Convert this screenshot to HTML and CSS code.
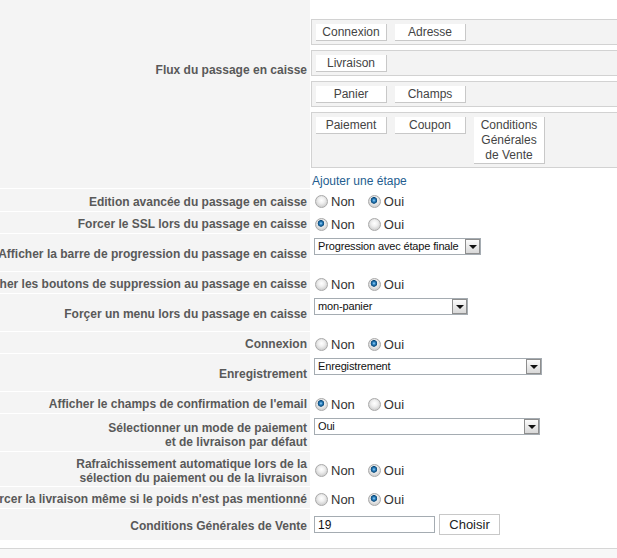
FILE: index.html
```html
<!DOCTYPE html>
<html lang="fr">
<head>
    <meta charset="UTF-8">
    <meta name="viewport" content="width=device-width, initial-scale=1.0">
    <title>Passage en caisse</title>
    <link rel="stylesheet" href="styles.css">
</head>
<body>
    <div class="settings">
        <div class="row row-flow">
            <div class="label">Flux du passage en caisse</div>
            <div class="field">
                <div class="steps">
                    <span class="step">Connexion</span>
                    <span class="step">Adresse</span>
                </div>
                <div class="steps">
                    <span class="step">Livraison</span>
                </div>
                <div class="steps">
                    <span class="step">Panier</span>
                    <span class="step">Champs</span>
                </div>
                <div class="steps">
                    <span class="step">Paiement</span>
                    <span class="step">Coupon</span>
                    <span class="step">Conditions Générales de Vente</span>
                </div>
                <a class="add-step" href="#">Ajouter une étape</a>
            </div>
        </div>

        <div class="row row-radio row-first">
            <div class="label">Edition avancée du passage en caisse</div>
            <div class="field">
                <label class="choice"><input type="radio" class="radio" name="advanced"> Non</label>
                <label class="choice"><input type="radio" class="radio" name="advanced" checked> Oui</label>
            </div>
        </div>

        <div class="row row-radio">
            <div class="label">Forcer le SSL lors du passage en caisse</div>
            <div class="field">
                <label class="choice"><input type="radio" class="radio" name="ssl" checked> Non</label>
                <label class="choice"><input type="radio" class="radio" name="ssl"> Oui</label>
            </div>
        </div>

        <div class="row row-select">
            <div class="label">Afficher la barre de progression du passage en caisse</div>
            <div class="field">
                <div class="select select-progress">
                    <span class="select-text">Progression avec étape finale</span>
                    <span class="select-arrow"></span>
                </div>
            </div>
        </div>

        <div class="row row-radio">
            <div class="label">Afficher les boutons de suppression au passage en caisse</div>
            <div class="field">
                <label class="choice"><input type="radio" class="radio" name="delete"> Non</label>
                <label class="choice"><input type="radio" class="radio" name="delete" checked> Oui</label>
            </div>
        </div>

        <div class="row row-select">
            <div class="label">Forçer un menu lors du passage en caisse</div>
            <div class="field">
                <div class="select select-menu">
                    <span class="select-text">mon-panier</span>
                    <span class="select-arrow"></span>
                </div>
            </div>
        </div>

        <div class="row row-radio">
            <div class="label">Connexion</div>
            <div class="field">
                <label class="choice"><input type="radio" class="radio" name="login"> Non</label>
                <label class="choice"><input type="radio" class="radio" name="login" checked> Oui</label>
            </div>
        </div>

        <div class="row row-select">
            <div class="label">Enregistrement</div>
            <div class="field">
                <div class="select select-register">
                    <span class="select-text">Enregistrement</span>
                    <span class="select-arrow"></span>
                </div>
            </div>
        </div>

        <div class="row row-radio">
            <div class="label">Afficher le champs de confirmation de l'email</div>
            <div class="field">
                <label class="choice"><input type="radio" class="radio" name="email" checked> Non</label>
                <label class="choice"><input type="radio" class="radio" name="email"> Oui</label>
            </div>
        </div>

        <div class="row row-select row-two-lines">
            <div class="label">Sélectionner un mode de paiement<br>et de livraison par défaut</div>
            <div class="field">
                <div class="select select-default">
                    <span class="select-text">Oui</span>
                    <span class="select-arrow"></span>
                </div>
            </div>
        </div>

        <div class="row row-radio row-two-lines">
            <div class="label">Rafraîchissement automatique lors de la<br>sélection du paiement ou de la livraison</div>
            <div class="field">
                <label class="choice"><input type="radio" class="radio" name="refresh"> Non</label>
                <label class="choice"><input type="radio" class="radio" name="refresh" checked> Oui</label>
            </div>
        </div>

        <div class="row row-radio">
            <div class="label">Forcer la livraison même si le poids n'est pas mentionné</div>
            <div class="field">
                <label class="choice"><input type="radio" class="radio" name="weight"> Non</label>
                <label class="choice"><input type="radio" class="radio" name="weight" checked> Oui</label>
            </div>
        </div>

        <div class="row row-cgv">
            <div class="label">Conditions Générales de Vente</div>
            <div class="field">
                <input type="text" class="text-input" value="19">
                <button class="choose-btn">Choisir</button>
            </div>
        </div>
    </div>

    <div class="footer"></div>
</body>
</html>
```

FILE: styles.css
```css
html, body {
    margin: 0;
    overflow: hidden;
}

body {
    font-family: "Liberation Sans", Arial, sans-serif;
    font-size: 12px;
    color: #333;
    background: #fff;
}

/* the page is scrolled a little to the right, labels run off the left edge */
.settings {
    margin-left: -90px;
    width: 900px;
}

.row {
    display: flex;
    border-bottom: 1px solid #fff;
}

.label {
    width: 400px;
    flex: none;
    box-sizing: border-box;
    display: flex;
    align-items: center;
    justify-content: flex-end;
    text-align: right;
    padding: 3px 3px 0 0;
    background: #f4f4f4;
    color: #595959;
    font-weight: bold;
    line-height: 14px;
    white-space: nowrap;
}

.row-two-lines .label {
    padding-top: 5px;
    padding-bottom: 1px;
}

.field {
    flex: 1;
    display: flex;
    align-items: center;
    box-sizing: border-box;
    padding-left: 4px;
}

.row-flow .label {
    padding: 0 3px 48px 0;
}

.row-flow .field {
    display: block;
    padding: 19px 0 0 1px;
}

.row-radio .field {
    min-height: 21px;
    padding-top: 3px;
}

.row-first .field {
    min-height: 22px;
}

.row-select .field {
    min-height: 37px;
    align-items: flex-start;
    padding-top: 4px;
}

.row-cgv .field {
    min-height: 31px;
}

/* checkout steps */
.steps {
    display: flex;
    align-items: flex-start;
    gap: 8px;
    margin-bottom: 5px;
    padding: 4px 0 3px 4px;
    border: 1px solid #d2d2d2;
    border-right: none;
    background: #f3f3f3;
}

.step {
    width: 70px;
    padding-top: 1px;
    background: #fff;
    border-right: 1px solid #c8c8c8;
    border-bottom: 1px solid #c8c8c8;
    color: #444;
    text-align: center;
    line-height: 15px;
}

.add-step {
    display: block;
    margin: 6px 0 0 1px;
    line-height: 14px;
    color: #245d8f;
    text-decoration: none;
}

/* radios */
.choice {
    display: inline-flex;
    align-items: center;
    gap: 3px;
    margin-right: 12px;
    font-size: 13px;
    color: #333;
}

.radio {
    appearance: none;
    margin: 0 0 0 1px;
    width: 13px;
    height: 13px;
    box-sizing: border-box;
    border: 1px solid #a9a9a9;
    border-radius: 50%;
    background: radial-gradient(circle at 50% 40%, #fff 0, #f0f0f0 3px, #d4d4d4 6px);
}

.radio:checked {
    background:
        radial-gradient(circle at 45% 40%, #9fd6f5 0, #2a7fbf 1.5px, #0d4a78 3px, rgba(13, 74, 120, 0) 3.6px),
        radial-gradient(circle at 50% 40%, #fff 0, #f0f0f0 3px, #d4d4d4 6px);
}

/* drop-downs */
.select {
    display: flex;
    height: 17px;
    box-sizing: border-box;
    border: 1px solid #a5acb2;
    background: #fff;
    font-size: 11px;
    line-height: 15px;
    color: #111;
}

.select-text {
    flex: 1;
    padding-left: 3px;
    letter-spacing: -0.15px;
    white-space: nowrap;
    overflow: hidden;
}

.select-arrow {
    width: 15px;
    height: 15px;
    flex: none;
    box-sizing: border-box;
    display: flex;
    align-items: center;
    justify-content: center;
    border: 1px solid #8e8e8e;
    background: linear-gradient(#fbfbfb, #d8d8d8);
}

.select-arrow::after {
    content: "";
    border-left: 4px solid transparent;
    border-right: 4px solid transparent;
    border-top: 4px solid #111;
    margin-top: 1px;
}

.select-progress { width: 167px; }
.select-menu { width: 154px; }
.select-register { width: 228px; }
.select-default { width: 226px; }

/* terms field */
.text-input {
    width: 121px;
    height: 17px;
    box-sizing: border-box;
    margin: 0;
    padding: 0 3px;
    border: 1px solid #a5acb2;
    font-family: inherit;
    font-size: 12px;
    color: #111;
}

.choose-btn {
    width: 61px;
    height: 21px;
    margin-left: 4px;
    padding: 0;
    border: 1px solid #c8c8c8;
    background: #fff;
    font-family: inherit;
    font-size: 13px;
    color: #222;
}

.footer {
    margin-top: 7px;
    height: 30px;
    border-top: 1px solid #d6d6d6;
    background: #f7f7f7;
}
```
